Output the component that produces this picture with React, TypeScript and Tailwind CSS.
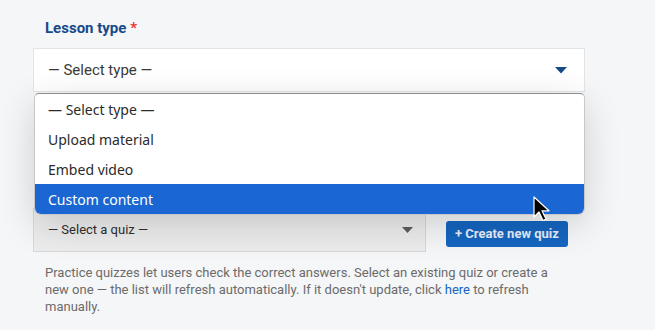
export default function App() {
  const options = ["— Select type —", "Upload material", "Embed video", "Custom content"];
  const active = 3;

  return (
    <div className="relative h-[330px] w-[655px] overflow-hidden bg-[#f5f6f7] font-['Roboto',sans-serif]">
      <div className="w-[585px] pl-[33px] pt-[19px]">
        <label className="block pl-3 text-[15px] font-bold leading-[18px] text-[#174a8b]">
          Lesson type <span className="text-[#e53935]">*</span>
        </label>

        <div className="relative mt-[11px]">
          <div className="flex h-[44px] items-center justify-between border border-[#e2e4e6] bg-white pl-[14px] pr-[17px]">
            <span className="text-[15px] text-[#3a3a3a]">— Select type —</span>
            <svg width="12" height="7" viewBox="0 0 12 7">
              <path d="M0 0h12L6 6.5z" fill="#174a8b" />
            </svg>
          </div>

          {/* open native list */}
          <div className="absolute left-px right-0 top-[45px] z-10 overflow-hidden rounded-b-[7px] rounded-t-[5px] border border-t-[#8c8c8c] border-x-[#c8c8c8] border-b-[#c8c8c8] bg-white shadow-[0_10px_36px_rgba(0,0,0,0.16)]">
            {options.map((o, i) => (
              <div
                key={o}
                className={
                  i === active
                    ? "flex h-[30px] items-center bg-[#1a66d2] pl-[13px] text-[14px] text-white font-['Noto_Sans',sans-serif]"
                    : "flex h-[30px] items-center pl-[13px] text-[14px] text-[#2b2b2b] font-['Noto_Sans',sans-serif]"
                }
              >
                {o}
              </div>
            ))}
          </div>
        </div>

        <div className="mt-[116px] flex items-center gap-5">
          <div className="flex h-[44px] w-[393px] shrink-0 items-center justify-between border border-[#d8d8d8] bg-[#ececec] pl-[14px] pr-[12px]">
            <span className="text-[13px] text-[#2f2f2f]">— Select a quiz —</span>
            <svg width="11" height="6" viewBox="0 0 11 6">
              <path d="M0 0h11L5.5 6z" fill="#5e5e5e" />
            </svg>
          </div>
          <button className="mt-[8px] h-[26px] whitespace-nowrap rounded-[3px] bg-[#1565c0] px-[9px] text-[13px] font-bold text-[#e8eef8]">
            + Create new quiz
          </button>
        </div>

        <p className="mt-[12px] w-[525px] pl-3 text-[13px] leading-[17px] text-[#6b6b6b]">
          Practice quizzes let users check the correct answers. Select an existing quiz or create a new one — the list will refresh automatically. If it doesn't update, click{" "}
          <a className="text-[#1565c0]">here</a> to refresh manually.
        </p>
      </div>

      {/* mouse pointer */}
      <svg className="absolute left-[533px] top-[196px] z-20" width="18" height="26" viewBox="0 0 18 26">
        <path d="M1 1v20l5-5 4 8.5 3-1.4-4-8.3h7z" fill="#000" stroke="#fff" strokeWidth="1.2" strokeLinejoin="round" />
      </svg>
    </div>
  );
}
